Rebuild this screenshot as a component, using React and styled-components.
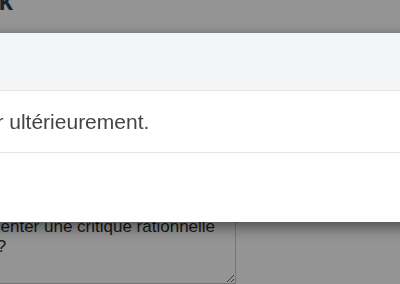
import React from 'react';
import styled, { createGlobalStyle } from 'styled-components';

const GlobalStyle = createGlobalStyle`
    html, body {
        margin: 0;
        padding: 0;
        background: #ffffff;
        overflow: hidden;
        font-family: "Liberation Sans", Arial, sans-serif;
    }
`

const App = () => {
    return (
        <>
            <GlobalStyle />
            <Page>
                <Title>Feedback</Title>
                <Label>Votre question</Label>
                <Question
                    rows={3}
                    defaultValue={"Comment pouvez-vous présenter une critique rationnelle\n?"}
                />
            </Page>
            <Backdrop />
            <Dialog role="dialog">
                <DialogHeader>
                    <DialogTitle>Erreur</DialogTitle>
                </DialogHeader>
                <DialogBody>
                    Veuillez réessayer ultérieurement.
                </DialogBody>
                <DialogFooter>
                    <Btn>Fermer</Btn>
                </DialogFooter>
            </Dialog>
        </>
    )
}

export default App

const Page = styled.div`
    display: flex;
    flex-direction: column;
    align-items: flex-start;
    margin: -14px 0 0 -233px;
    width: 700px;
`

const Title = styled.h1`
    margin: 0 0 0 126px;
    font-size: 26px;
    line-height: 1.2;
    font-weight: 700;
    color: #2c3e50;
`

const Label = styled.label`
    margin: 152px 0 21px;
    font-size: 16px;
    line-height: 20px;
    color: #333;
`

const Question = styled.textarea`
    box-sizing: border-box;
    width: 469px;
    height: 74px;
    padding: 6px;
    border: 1px solid #cccccc;
    border-radius: 0;
    font-family: "Liberation Sans", Arial, sans-serif;
    font-size: 17px;
    line-height: 20px;
    text-align: center;
    color: #2a2a2a;
    background: #ffffff;
    resize: vertical;
    overflow: hidden;
`

const Backdrop = styled.div`
    position: fixed;
    inset: 0;
    background: rgba(0, 0, 0, 0.42);
`

const Dialog = styled.div`
    position: fixed;
    top: 33px;
    left: -182px;
    width: 700px;
    background: #ffffff;
    border-radius: 6px;
    box-shadow: 0 5px 15px rgba(0, 0, 0, 0.5);
    display: flex;
    flex-direction: column;
`

const DialogHeader = styled.div`
    padding: 16px 15px 15px;
    background: #f4f5f7;
    border-bottom: 1px solid #e5e5e5;
    border-radius: 6px 6px 0 0;
`

const DialogTitle = styled.h4`
    margin: 0;
    font-size: 18px;
    line-height: 26px;
    font-weight: 500;
    color: #333;
`

const DialogBody = styled.div`
    padding: 16px 15px 15px;
    font-size: 21px;
    line-height: 30px;
    color: #444;
`

const DialogFooter = styled.div`
    display: flex;
    justify-content: flex-end;
    padding: 15px;
    border-top: 1px solid #e5e5e5;
`

const Btn = styled.button`
    height: 39px;
    padding: 0 16px;
    border: 1px solid #cccccc;
    border-radius: 4px;
    background: #ffffff;
    font-family: "Liberation Sans", Arial, sans-serif;
    font-size: 16px;
    color: #333;
    cursor: pointer;
`
